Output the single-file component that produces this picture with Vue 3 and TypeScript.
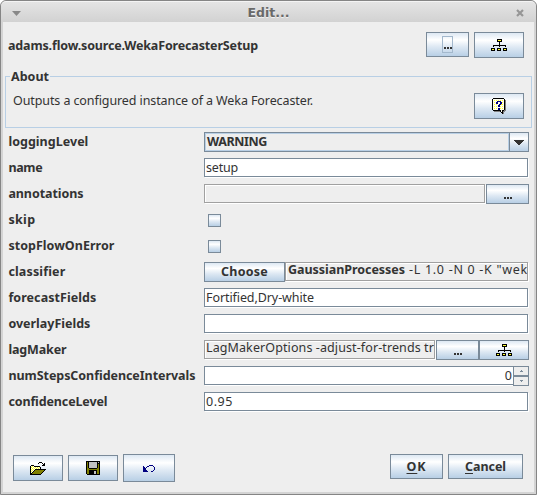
<script setup lang="ts">
import { defineComponent, h, type Directive } from 'vue'

// Spreads the letters of a text so that it takes the given width in pixels.
const vFit: Directive<HTMLElement, number> = {
  mounted(el, { value }) {
    const count = (el.textContent ?? '').length
    const natural = el.getBoundingClientRect().width
    if (count > 1) el.style.letterSpacing = `${(value - natural) / count}px`
  },
}

const palette: Record<string, string> = {
  k: '#000000', y: '#ffff30', w: '#fffff0', o: '#808000',
  g: '#c0c0c0', d: '#808080', n: '#000080',
}

const icons: Record<string, string[]> = {
  tree: [
    '......kkkkk.....',
    '......kyyyk.....',
    '......kkkkk.....',
    '........k.......',
    '........k.......',
    '........k.......',
    '..kkkkkkkkkkkkk.',
    '..k.....k.....k.',
    '................',
    'kkkk..kkkk..kkkk',
    'kyyk..kyyk..kyyk',
    'kkkk..kkkk..kkkk',
  ],
  help: [
    '.kkkkkkkkkkk..',
    'kwwwwwwwwwwwk.',
    'kwywywywywywkd',
    'kwwwwnnnnwwwkd',
    'kwywnnwwnnywkd',
    'kwwwnnwwnnwwkd',
    'kwywywwnnyywkd',
    'kwwwwwnnwwwwkd',
    'kwywywnnywywkd',
    'kwwwwwwwwwwwkd',
    'kwywywnnywywkd',
    'kwwwwwnnwwwwkd',
    '.kkkkkkkkwkkdd',
    '..ddddddkwkdd.',
    '.........kkd..',
    '..........kd..',
  ],
  open: [
    '.........kkk....',
    '........k...k.k.',
    '.............kk.',
    '.kkk........kkk.',
    'kwywkkkkkk......',
    'kywywywywyk.....',
    'kwywywywywk.....',
    'kywywkkkkkkkkkkk',
    'kwywkoooooooook.',
    'kywkoooooooook..',
    'kwkoooooooook...',
    'kkoooooooook....',
    'kkkkkkkkkkk.....',
  ],
  save: [
    'kkkkkkkkkkkkkk',
    'kokggggggggkgk',
    'kokggggggggkkk',
    'kokggggggggkok',
    'kokggggggggkok',
    'kokggggggggkok',
    'kokggggggggkok',
    'kookkkkkkkkook',
    'kooooooooooook',
    'kookkkkkkkkook',
    'kookkkkkggkook',
    'kookkkkkggkook',
    'kookkkkkggkook',
    '.kkkkkkkkkkkkk',
  ],
  undo: [
    '......nnnn..',
    'n...nn....n.',
    'nn.n.......n',
    'nnn........n',
    'nnn........n',
    'nnnn......n.',
    'nnnnn...nn..',
  ],
}

// Draws one of the pixel icons above, one rect per run of equal pixels.
const PixelIcon = defineComponent({
  props: { name: { type: String, required: true } },
  setup(props) {
    return () => {
      const rows = icons[props.name]
      const rects = rows.flatMap((row, y) =>
        [...row.matchAll(/([a-z])\1*/g)].map((m) =>
          h('rect', { x: m.index, y, width: m[0].length, height: 1, fill: palette[m[1]] }),
        ),
      )
      const width = rows[0].length
      const height = rows.length
      return h('svg', { width, height, viewBox: `0 0 ${width} ${height}`, 'shape-rendering': 'crispEdges' }, rects)
    }
  },
})

interface Property {
  name: string
  width: number
  kind: 'combo' | 'text' | 'annotations' | 'check' | 'classifier' | 'lag' | 'spinner'
  value?: string
  valueWidth?: number
}

const properties: Property[] = [
  { name: 'loggingLevel', width: 80, kind: 'combo', value: 'WARNING', valueWidth: 60 },
  { name: 'name', width: 34, kind: 'text', value: 'setup', valueWidth: 32 },
  { name: 'annotations', width: 75, kind: 'annotations' },
  { name: 'skip', width: 27, kind: 'check' },
  { name: 'stopFlowOnError', width: 106, kind: 'check' },
  { name: 'classifier', width: 57, kind: 'classifier' },
  { name: 'forecastFields', width: 88, kind: 'text', value: 'Fortified,Dry-white', valueWidth: 108 },
  { name: 'overlayFields', width: 82, kind: 'text' },
  { name: 'lagMaker', width: 58, kind: 'lag', value: 'LagMakerOptions -adjust-for-trends tr', valueWidth: 228 },
  { name: 'numStepsConfidenceIntervals', width: 187, kind: 'spinner', value: '0', valueWidth: 8 },
  { name: 'confidenceLevel', width: 99, kind: 'text', value: '0.95', valueWidth: 27 },
]
</script>

<template>
  <div class="window">
    <header class="titlebar">
      <svg class="menu" width="9" height="5" viewBox="0 0 9 5"><path d="M0 0h9L4.5 5z" /></svg>
      <span v-fit="42" class="title">Edit...</span>
      <svg class="close" width="8" height="8" viewBox="0 0 8 8"><path d="M1 1l6 6M7 1l-6 6" /></svg>
    </header>

    <main class="content">
      <div class="head">
        <span v-fit="250" class="class-name">adams.flow.source.WekaForecasterSetup</span>
        <button class="btn dots-btn tall"><span class="focus"><i class="dots"></i></span></button>
        <button class="btn icon-btn"><PixelIcon name="tree" /></button>
      </div>

      <section class="about">
        <span class="legend"><span v-fit="38">About</span></span>
        <span v-fit="300" class="description">Outputs a configured instance of a Weka Forecaster.</span>
        <button class="btn icon-btn help"><PixelIcon name="help" /></button>
      </section>

      <div class="properties">
        <div v-for="p in properties" :key="p.name" class="row">
          <div class="label"><span v-fit="p.width">{{ p.name }}</span></div>
          <div class="editor">
            <div v-if="p.kind === 'combo'" class="combo">
              <div class="combo-value"><span v-fit="p.valueWidth!">{{ p.value }}</span></div>
              <div class="combo-arrow">
                <svg width="10" height="5" viewBox="0 0 10 5" shape-rendering="crispEdges"><path d="M0 0h10v1H9v1H8v1H7v1H6v1H4V4H3V3H2V2H1V1H0z" /></svg>
              </div>
            </div>
            <div v-else-if="p.kind === 'text'" class="field">
              <span v-if="p.value" v-fit="p.valueWidth!">{{ p.value }}</span>
            </div>
            <template v-else-if="p.kind === 'annotations'">
              <div class="field readonly"></div>
              <button class="btn dots-btn"><i class="dots"></i></button>
            </template>
            <span v-else-if="p.kind === 'check'" class="check"></span>
            <template v-else-if="p.kind === 'classifier'">
              <button class="btn choose"><span v-fit="47">Choose</span></button>
              <div class="field readonly options">
                <b v-fit="117">GaussianProcesses</b><span v-fit="123">&nbsp;-L 1.0 -N 0 -K "wek</span>
              </div>
            </template>
            <template v-else-if="p.kind === 'lag'">
              <div class="field readonly"><span v-fit="p.valueWidth!">{{ p.value }}</span></div>
              <button class="btn dots-btn"><i class="dots"></i></button>
              <button class="btn icon-btn"><PixelIcon name="tree" /></button>
            </template>
            <template v-else>
              <div class="field number"><span>{{ p.value }}</span></div>
              <div class="spinner">
                <span><svg width="3" height="2" viewBox="0 0 3 2" shape-rendering="crispEdges"><path d="M1 0h1v1h1v1H0V1h1z" /></svg></span>
                <span><svg width="3" height="2" viewBox="0 0 3 2" shape-rendering="crispEdges"><path d="M0 0h3v1H2v1H1V1H0z" /></svg></span>
              </div>
            </template>
          </div>
        </div>
      </div>

      <footer class="actions">
        <button class="btn icon-btn"><PixelIcon name="open" /></button>
        <button class="btn icon-btn"><PixelIcon name="save" /></button>
        <button class="btn undo"><PixelIcon name="undo" /></button>
        <button class="btn ok"><span v-fit="20"><u>O</u>K</span></button>
        <button class="btn cancel"><span v-fit="41"><u>C</u>ancel</span></button>
      </footer>
    </main>
  </div>
</template>

<style>
body {
  background: #fff;
  overflow: hidden;
}
</style>

<style scoped>
* {
  box-sizing: border-box;
}
.window {
  width: 537px;
  height: 495px;
  border: 1px solid #858585;
  border-radius: 6px 6px 0 0;
  padding: 0 2px 2px;
  background: #d4d4d4;
  font: 12.5px/18px 'Noto Sans', 'Open Sans', sans-serif;
  color: #333;
  white-space: nowrap;
  overflow: hidden;
}
.titlebar {
  display: flex;
  align-items: center;
  justify-content: space-between;
  height: 21px;
  margin: 0 -2px;
  padding: 2px 12px 0 11px;
  border-top: 1px solid #f4f4f4;
  border-radius: 5px 5px 0 0;
  background: linear-gradient(#e4e4e4, #d2d2d2);
}
.title {
  font: bold 12.5px/18px 'DejaVu Sans', sans-serif;
  color: #696969;
  text-shadow: 0 1px 0 #f0f0f0;
}
.menu {
  fill: #888;
}
.close {
  stroke: #969696;
  stroke-width: 2.2;
  fill: none;
}
.content {
  display: flex;
  flex-direction: column;
  height: 470px;
  background: #eee;
}
.btn {
  display: flex;
  flex: none;
  align-items: center;
  justify-content: center;
  height: 20px;
  margin: 0;
  padding: 0;
  border: 1px solid #7a8a99;
  background: linear-gradient(#dde8f3, #fff 30%, #dde8f3 60%, #b8cfe5);
  color: #333;
  font: bold 12.5px/18px 'Noto Sans', 'Open Sans', sans-serif;
}
.dots-btn {
  width: 43px;
}
.dots-btn.tall {
  height: 25px;
}
.icon-btn {
  width: 50px;
}
.focus {
  display: flex;
  justify-content: center;
  width: 11px;
  height: 17px;
  border: 1px solid #a3b8cc;
  padding-top: 5px;
}
.dots {
  width: 8px;
  height: 2px;
  margin-top: 8px;
  background: repeating-linear-gradient(90deg, #333 0 2px, transparent 2px 3px);
}
.focus .dots {
  margin-top: 5px;
}
.head {
  display: flex;
  gap: 5px;
  height: 54px;
  padding: 10px 10px 0 5px;
}
.class-name {
  margin-right: auto;
  padding-top: 5px;
  font-weight: bold;
}
.head .icon-btn,
.help,
.actions .icon-btn {
  height: 26px;
}
.about {
  display: flex;
  justify-content: space-between;
  height: 52px;
  margin: 0 2px;
  padding: 16px 7px 0 8px;
  border: 1px solid #b8cfe5;
}
.legend {
  width: 40px;
  height: 18px;
  margin: -25px -40px 0 -4px;
  padding-left: 1px;
  background: #eee;
  font-weight: bold;
}
.description {
  margin-top: -1px;
  margin-right: auto;
  margin-left: 3px;
}
.properties {
  display: grid;
  gap: 6px;
  padding: 4px 5px 0;
}
.row {
  display: grid;
  grid-template-columns: 196px 325px;
  height: 20px;
}
.label {
  padding-left: 0.4px;
  font-weight: bold;
  line-height: 19px;
}
.editor {
  display: flex;
  min-width: 0;
}
.field {
  flex: 1;
  min-width: 0;
  height: 19px;
  margin-right: 1px;
  padding-left: 1px;
  border: 1px solid #7a8a99;
  background: #fff;
  box-shadow: 1px 1px 0 #fff;
  line-height: 18px;
}
.readonly {
  border-color: #a0a0a0;
  background: #eee;
  box-shadow: 1px 1px 0 #fff, inset 1px 1px 0 #fff;
  line-height: 14px;
  overflow: hidden;
}
.options {
  padding-left: 2px;
}
.number {
  margin: 0;
  padding-right: 1px;
  border-right: 0;
  text-align: right;
}
.spinner {
  width: 16px;
}
.spinner span {
  display: flex;
  align-items: center;
  justify-content: center;
  height: 10px;
  border: 1px solid #7a8a99;
  fill: #7a8a99;
}
.combo {
  display: flex;
  width: 325px;
  border: 1px solid #7a8a99;
}
.combo-value {
  flex: 1;
  padding-left: 1px;
  border: 1px solid #b8cfe5;
  font-weight: bold;
  line-height: 16px;
}
.combo-arrow {
  display: flex;
  align-items: center;
  justify-content: center;
  width: 19px;
  border-left: 1px solid #7a8a99;
  background: linear-gradient(#dde8f3, #fff 30%, #dde8f3 60%, #b8cfe5);
  fill: #333;
}
.check {
  width: 13px;
  height: 13px;
  margin: 4px;
  border: 1px solid #7a8a99;
  background: linear-gradient(#dde8f3, #fff 30%, #dde8f3 60%, #b8cfe5);
}
.choose {
  width: 81px;
}
.actions {
  display: flex;
  align-items: flex-start;
  gap: 5px;
  margin-top: auto;
  height: 38px;
  padding: 0 11px 0 10px;
}
.actions .icon-btn {
  margin-top: 1px;
}
.undo {
  width: 52px;
  height: 28px;
}
.ok {
  width: 53px;
  height: 25px;
  margin-left: auto;
}
.cancel {
  width: 75px;
  height: 25px;
}
u {
  text-underline-offset: 2px;
}
</style>
